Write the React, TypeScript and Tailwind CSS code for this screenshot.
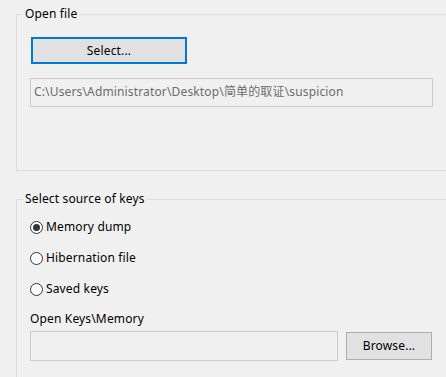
import React from "react";

const font = { fontFamily: '"Noto Sans", "Noto Sans CJK SC", sans-serif' };

function Radio({ checked, label }: { checked?: boolean; label: string }) {
  return (
    <div className="flex h-[20px] items-center">
      <span className="flex h-[13px] w-[13px] items-center justify-center rounded-full border border-[#333333] bg-white">
        {checked && <span className="h-[7px] w-[7px] rounded-full bg-[#333333]" />}
      </span>
      <span className="ml-[3px] text-[12px] leading-[16px] text-black">{label}</span>
    </div>
  );
}

export default function App() {
  return (
    <div
      className="flex h-[377px] w-[446px] flex-col overflow-hidden bg-[#f0f0f0] tracking-[0.15px] text-black"
      style={font}
    >
      <fieldset className="ml-[16px] mt-[6px] h-[165px] w-[450px] shrink-0 border border-[#dcdcdc] p-0">
        <legend className="ml-[6px] px-[2px] text-[12px] leading-[16px]">Open file</legend>
        <div className="flex flex-col pl-[13px]">
          <button className="ml-[1px] mt-[15px] h-[27px] w-[156px] border-2 border-[#0078d7] bg-[#e1e1e1] text-[12px] leading-[16px]">
            Select...
          </button>
          <div className="mt-[14px] flex h-[29px] w-[403px] items-center border border-[#cccccc] bg-[#f0f0f0] pb-[2px] pl-[3px] text-[12px] leading-[16px] text-[#6d6d6d]">
            C:\Users\Administrator\Desktop\简单的取证\suspicion
          </div>
        </div>
      </fieldset>

      <fieldset className="ml-[16px] mt-[20px] h-[200px] w-[450px] shrink-0 border border-[#dcdcdc] p-0">
        <legend className="ml-[6px] px-[2px] text-[12px] leading-[16px]">Select source of keys</legend>
        <div className="flex flex-col pl-[13px]">
          <div className="mt-[10px] flex flex-col gap-[11px]">
            <Radio checked label="Memory dump" />
            <Radio label="Hibernation file" />
            <Radio label="Saved keys" />
          </div>
          <div className="mt-[12px] text-[12px] leading-[16px]">Open Keys\Memory</div>
          <div className="mt-[4px] flex items-center gap-[8px]">
            <div className="h-[30px] w-[308px] border border-[#cccccc] bg-[#f0f0f0]" />
            <button className="h-[28px] w-[86px] border border-[#adadad] bg-[#e1e1e1] text-[12px] leading-[16px]">
              Browse...
            </button>
          </div>
        </div>
      </fieldset>
    </div>
  );
}
